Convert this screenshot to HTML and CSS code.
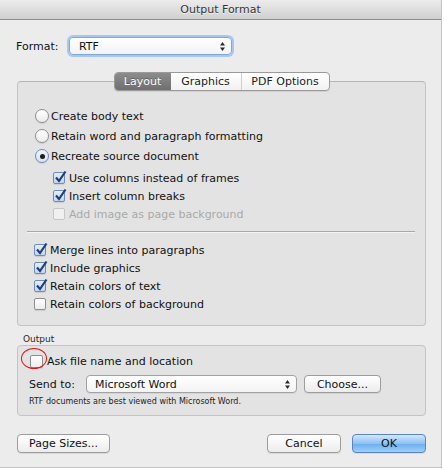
FILE: index.html
```html
<!DOCTYPE html>
<html lang="en">
<head>
    <meta charset="UTF-8">
    <title>Output Format</title>
    <link rel="stylesheet" href="styles.css">
</head>
<body>
    <div class="window">
        <div class="titlebar">Output Format</div>

        <div class="content">
            <div class="format-row">
                <span class="label">Format:</span>
                <div class="popup popup-format focused">
                    <span>RTF</span>
                    <svg class="arrows" width="5" height="9" viewBox="0 0 5 9">
                        <polygon points="0,3.5 2.5,0 5,3.5" fill="#2a2a2a"></polygon>
                        <polygon points="0,5.5 2.5,9 5,5.5" fill="#2a2a2a"></polygon>
                    </svg>
                </div>
            </div>

            <div class="tabbox">
                <div class="tabs">
                    <span class="tab selected">Layout</span><span class="tab">Graphics</span><span class="tab">PDF Options</span>
                </div>

                <div class="options first">
                    <div class="row radio-row"><span class="radio"></span>Create body text</div>
                    <div class="row radio-row"><span class="radio"></span>Retain word and paragraph formatting</div>
                    <div class="row radio-row"><span class="radio on"></span>Recreate source document</div>
                    <div class="sub">
                        <div class="row"><span class="check on"><svg viewBox="0 0 14 14"><path d="M3 7.5 L6 11 L12.5 1.5" fill="none" stroke="#1f3f7a" stroke-width="2.2"></path></svg></span>Use columns instead of frames</div>
                        <div class="row"><span class="check on"><svg viewBox="0 0 14 14"><path d="M3 7.5 L6 11 L12.5 1.5" fill="none" stroke="#1f3f7a" stroke-width="2.2"></path></svg></span>Insert column breaks</div>
                        <div class="row disabled"><span class="check"></span>Add image as page background</div>
                    </div>
                </div>

                <div class="sep"></div>

                <div class="options second">
                    <div class="row"><span class="check on"><svg viewBox="0 0 14 14"><path d="M3 7.5 L6 11 L12.5 1.5" fill="none" stroke="#1f3f7a" stroke-width="2.2"></path></svg></span>Merge lines into paragraphs</div>
                    <div class="row"><span class="check on"><svg viewBox="0 0 14 14"><path d="M3 7.5 L6 11 L12.5 1.5" fill="none" stroke="#1f3f7a" stroke-width="2.2"></path></svg></span>Include graphics</div>
                    <div class="row"><span class="check on"><svg viewBox="0 0 14 14"><path d="M3 7.5 L6 11 L12.5 1.5" fill="none" stroke="#1f3f7a" stroke-width="2.2"></path></svg></span>Retain colors of text</div>
                    <div class="row"><span class="check"></span>Retain colors of background</div>
                </div>
            </div>

            <div class="group-label">Output</div>
            <div class="groupbox">
                <div class="row ask-row">
                    <span class="check-wrap"><span class="check big"></span><span class="annotation"></span></span>Ask file name and location
                </div>
                <div class="send-row">
                    <span class="label">Send to:</span>
                    <div class="popup popup-send">
                        <span>Microsoft Word</span>
                        <svg class="arrows" width="5" height="9" viewBox="0 0 5 9">
                            <polygon points="0,3.5 2.5,0 5,3.5" fill="#2a2a2a"></polygon>
                            <polygon points="0,5.5 2.5,9 5,5.5" fill="#2a2a2a"></polygon>
                        </svg>
                    </div>
                    <button class="btn btn-choose">Choose...</button>
                </div>
                <div class="note">RTF documents are best viewed with Microsoft Word.</div>
            </div>

            <div class="buttons">
                <button class="btn btn-page">Page Sizes...</button>
                <span class="spacer"></span>
                <button class="btn btn-cancel">Cancel</button>
                <button class="btn btn-ok">OK</button>
            </div>
        </div>
    </div>
</body>
</html>
```

FILE: styles.css
```css
body {
    margin: 0;
    padding: 0;
    background: #ffffff;
    font-family: 'DejaVu Sans', Verdana, sans-serif;
    font-size: 11px;
    color: #111111;
}

.window {
    width: 442px;
    height: 468px;
    background: #ececec;
    border-right: 1px solid #c4c4c4;
    border-bottom: 1px solid #c4c4c4;
    box-sizing: border-box;
}

.titlebar {
    height: 20px;
    box-sizing: border-box;
    background: linear-gradient(#ececec, #d0d0d0);
    border-bottom: 1px solid #8e8e8e;
    text-align: center;
    line-height: 19px;
    color: #363636;
    text-shadow: 0 1px 0 rgba(255,255,255,0.6);
}

.content {
    padding: 0 15px 0 17px;
}

/* format popup */
.format-row {
    display: flex;
    align-items: center;
    padding-top: 17px;
    margin-left: -1px;
}

.format-row .label {
    width: 53px;
}

.popup {
    height: 18px;
    box-sizing: border-box;
    background: linear-gradient(#ffffff, #f3f3f3);
    border: 1px solid #a2a2a2;
    border-radius: 4px;
    display: flex;
    align-items: center;
    justify-content: space-between;
    padding: 0 6px 0 8px;
    box-shadow: 0 1px 0 rgba(0,0,0,0.06);
}

.popup-format {
    width: 163px;
    padding-left: 9px;
}

.popup.focused {
    border-color: #7fa7d9;
    box-shadow: 0 0 0 2px #a5c8f0;
}

.arrows {
    display: block;
}

/* tab box */
.tabbox {
    margin-top: 26px;
    background: #e3e3e3;
    border: 1px solid #c3c3c3;
    border-top-color: #b6b6b6;
    border-radius: 4px;
    padding-bottom: 12px;
}

.tabs {
    display: flex;
    width: 216px;
    height: 19px;
    margin: -10px auto 0;
    box-sizing: border-box;
    border: 1px solid #9a9a9a;
    border-radius: 4px;
    background: linear-gradient(#ffffff, #f1f1f1);
    overflow: hidden;
    box-shadow: 0 1px 0 rgba(0,0,0,0.08);
}

.tab {
    display: flex;
    align-items: center;
    justify-content: center;
    height: 100%;
    color: #1c1c1c;
}

.tab:nth-child(1) { width: 56px; }
.tab:nth-child(2) { width: 70px; }
.tab:nth-child(3) { flex: 1; border-left: 1px solid #cfcfcf; }

.tab.selected {
    background: linear-gradient(#8c8c8c, #6f6f6f);
    color: #ffffff;
    text-shadow: 0 -1px 0 rgba(0,0,0,0.3);
}

.options {
    padding-left: 17px;
}

.options.first {
    margin-top: 15px;
}

.row {
    display: flex;
    align-items: center;
    height: 18px;
}

.radio-row {
    height: 20px;
}

.sub {
    margin-top: 3px;
    padding-left: 18px;
}

.radio {
    width: 14px;
    height: 14px;
    box-sizing: border-box;
    border: 1px solid #8e8e8e;
    border-radius: 50%;
    background: linear-gradient(#ffffff, #ececec);
    margin-right: 2px;
    display: flex;
    align-items: center;
    justify-content: center;
    box-shadow: 0 1px 1px rgba(0,0,0,0.1);
}

.radio.on {
    border-color: #6c8dbd;
    background: linear-gradient(#eef4fb, #d6e3f2);
}

.radio.on::after {
    content: "";
    width: 5px;
    height: 5px;
    border-radius: 50%;
    background: #1d1d1d;
}

.check {
    position: relative;
    width: 12px;
    height: 12px;
    box-sizing: border-box;
    border: 1px solid #8e8e8e;
    border-radius: 2px;
    background: linear-gradient(#ffffff, #ededed);
    margin-right: 4px;
    box-shadow: 0 1px 1px rgba(0,0,0,0.1);
}

.check.on {
    border-color: #6f8cb8;
    background: linear-gradient(#e4edf8, #c3d5ee);
}

.check svg {
    position: absolute;
    left: -1px;
    top: -3px;
    width: 14px;
    height: 14px;
}

.check.big {
    width: 13px;
    height: 13px;
}

.disabled {
    color: #a9a9a9;
}

.disabled .check {
    border-color: #c6c6c6;
    box-shadow: none;
    background: #f0f0f0;
}

.options.second {
    margin-top: 9px;
    margin-left: -1px;
}

.sep {
    height: 1px;
    background: #a9a9a9;
    margin: 8px 10px 0 9px;
    box-shadow: 0 1px 0 #f4f4f4;
}

/* output group */
.group-label {
    margin: 7px 0 0 6px;
    font-size: 9px;
    line-height: 12px;
    color: #2a2a2a;
}

.groupbox {
    background: #e3e3e3;
    border: 1px solid #c3c3c3;
    border-radius: 4px;
    padding: 6px 0 8px 12px;
}

.check-wrap {
    position: relative;
    display: flex;
}

.annotation {
    position: absolute;
    left: -9px;
    top: -7px;
    width: 26px;
    height: 21px;
    box-sizing: border-box;
    border: 1px solid #e0141e;
    border-radius: 50%;
}

.send-row {
    display: flex;
    align-items: center;
    margin-top: 5px;
    margin-left: -1px;
}

.send-row .label {
    width: 57px;
}

.popup-send {
    width: 211px;
}

.note {
    margin-top: 4px;
    margin-left: -1px;
    font-size: 8px;
    line-height: 10px;
    color: #222;
}

/* buttons */
.btn {
    height: 19px;
    box-sizing: border-box;
    padding: 0;
    font-family: inherit;
    font-size: 11px;
    color: #111111;
    background: linear-gradient(#ffffff, #ececec);
    border: 1px solid #9c9c9c;
    border-radius: 4px;
    box-shadow: 0 1px 0 rgba(0,0,0,0.08);
}

.btn-choose {
    width: 77px;
    height: 18px;
    margin-left: 7px;
}

.buttons {
    display: flex;
    margin-top: 18px;
}

.spacer {
    flex: 1;
}

.btn-page {
    width: 93px;
}

.btn-cancel {
    width: 74px;
    margin-right: 11px;
}

.btn-ok {
    width: 74px;
    border-color: #5a84be;
    background: linear-gradient(#d3e7fb, #8ec2f2 50%, #6aaeee 51%, #9fcff7);
}
```
